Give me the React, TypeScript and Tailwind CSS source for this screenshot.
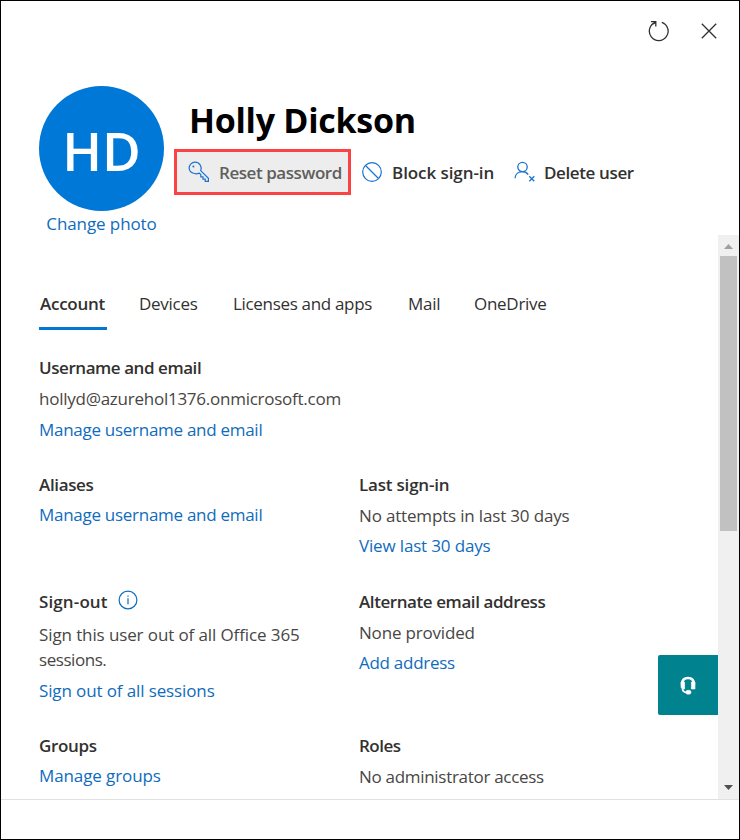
import type { ReactNode } from "react";

function Line({ className, children }: { className: string; children: ReactNode }) {
  return (
    <div className="flex">
      <span className={"whitespace-nowrap leading-6 " + className}>{children}</span>
    </div>
  );
}

const heading = "font-semibold text-[#323130] ";
const link = "text-[#0f6cbd] ";

function RefreshIcon() {
  return (
    <svg width="22" height="22" viewBox="0 0 22 22" fill="none" stroke="#323130" strokeWidth="1.3">
      <path d="M13.800 2.300A9.400 9.400 0 1 1 7.400 2.400" />
      <path d="M2.900 1.700h4.900v4.900M7.600 1.900L5 4" />
    </svg>
  );
}

function CloseIcon() {
  return (
    <svg width="16" height="16" viewBox="0 0 16 16" fill="none" stroke="#323130" strokeWidth="1.3">
      <path d="M.8.8l14.4 14.4M15.2.8L.8 15.2" />
    </svg>
  );
}

function KeyIcon() {
  return (
    <svg width="22" height="22" viewBox="0 0 22 22" fill="none" stroke="#1a73d0" strokeWidth="1.2">
      <path d="M12.700 9.600l7.700 7.700v3h-3.200v-2.200h-2.200v-2.200h-2.200v-2.300l-1.600-1.500C7.500 13.800 1.200 12 1.200 7 1.200 3.800 3.800 1.200 7 1.200c4.600 0 7.200 4.300 5.700 8.400z" />
      <circle cx="5.400" cy="5.400" r="1" fill="#1a73d0" stroke="none" />
    </svg>
  );
}

function BlockIcon() {
  return (
    <svg width="20" height="20" viewBox="0 0 20 20" fill="none" stroke="#1a73d0" strokeWidth="1.2">
      <circle cx="10" cy="10" r="9.300" />
      <path d="M3.500 3.500l13 13" />
    </svg>
  );
}

function DeleteUserIcon() {
  return (
    <svg width="22" height="22" viewBox="0 0 22 22" fill="none" stroke="#1a73d0" strokeWidth="1.3">
      <circle cx="8.500" cy="6" r="4.700" />
      <path d="M1 17.300c.2-4.200 3.300-6.700 7.300-6.700 2.500 0 4.600 1 5.900 3" />
      <path d="M15.300 15.300l5 5M20.300 15.300l-5 5" />
    </svg>
  );
}

function InfoIcon() {
  return (
    <svg width="20" height="20" viewBox="0 0 20 20" fill="none" stroke="#0f6cbd" strokeWidth="1.200">
      <circle cx="10" cy="10" r="8.900" />
      <path d="M10 8.200v6M10 5.400v1.400" />
    </svg>
  );
}

function HeadsetIcon() {
  return (
    <svg width="16" height="19" viewBox="0 0 16 19" fill="none" stroke="#fff">
      <path d="M2 8.500C2 3.800 4.200 2 8 2s6 1.800 6 6.500" strokeWidth="2.600" />
      <path d="M1 6h3.600v7H2.800L1 11.500zM11.400 6H15v7h-3.600z" fill="#fff" strokeWidth=".6" />
      <path d="M2.400 12.500c.2 2.500 1.500 3.900 4.500 3.900" strokeWidth="1.800" />
      <rect x="5.800" y="14.300" width="5.200" height="3.900" rx="1.800" fill="#fff" strokeWidth=".5" />
    </svg>
  );
}

export default function App() {
  return (
    <div className="relative flex h-[840px] w-[740px] flex-col overflow-hidden border border-black bg-white font-['Open_Sans','Noto_Sans',sans-serif] text-[17px] text-[#484644]">
      <header className="flex h-[234px] shrink-0 flex-col">
        <div className="flex h-[60px] shrink-0 items-center justify-end gap-[31px] pr-[22px]">
          <RefreshIcon />
          <CloseIcon />
        </div>
        <div className="flex pl-[38px] pt-[25px]">
          <div className="flex w-[125px] flex-col items-center">
            <div className="flex h-[125px] w-[125px] items-center justify-center rounded-full bg-[#0078d7] text-[53px] font-semibold leading-none text-white">
              <span className="mt-[4px]">HD</span>
            </div>
            <span className={link + "mt-px whitespace-nowrap leading-6 tracking-[-0.1px]"}>Change photo</span>
          </div>
          <div className="flex flex-col pl-[10px]">
            <h1 className="h-[63px] whitespace-nowrap pl-[15px] pt-[9px] text-[34px] font-bold leading-[50px] tracking-[-0.28px] text-black">Holly Dickson</h1>
            <div className="flex h-[46px] items-center font-semibold text-[#323130]">
              <div className="flex h-[46px] w-[177px] items-center border-[3px] border-[#fb4343] bg-[#ededed] pl-[11px] text-[#605e5c]">
                <KeyIcon />
                <span className="ml-[9px] mt-[2px] whitespace-nowrap tracking-[-0.44px]">Reset password</span>
              </div>
              <div className="ml-[11px] flex w-[152px] items-center">
                <BlockIcon />
                <span className="ml-[10px] mt-[2px] whitespace-nowrap tracking-[-0.07px]">Block sign-in</span>
              </div>
              <DeleteUserIcon />
              <span className="ml-[8px] mt-[2px] whitespace-nowrap tracking-[-0.38px]">Delete user</span>
            </div>
          </div>
        </div>
      </header>

      <main className="flex h-[564px] shrink-0">
        <div className="flex w-[717px] flex-col pl-[38px]">
          <nav className="mt-[57px] flex h-[38px] text-[#323130]">
            <span className="w-[68px] whitespace-nowrap border-b-[3px] border-[#0078d4] pl-[1px] font-semibold leading-6 tracking-[-0.25px]">Account</span>
            <span className="ml-[32px] w-[94px] whitespace-nowrap leading-6 tracking-[-0.28px]">Devices</span>
            <span className="w-[175px] whitespace-nowrap leading-6 tracking-[-0.32px]">Licenses and apps</span>
            <span className="w-[66px] whitespace-nowrap leading-6 tracking-[-0.28px]">Mail</span>
            <span className="whitespace-nowrap leading-6 tracking-[-0.28px]">OneDrive</span>
          </nav>

          <section className="mt-[26px] flex h-[117px] flex-col gap-[7px]">
            <Line className={heading + "tracking-[-0.44px]"}>Username and email</Line>
            <Line className="tracking-[-0.25px]">hollyd@azurehol1376.onmicrosoft.com</Line>
            <Line className={link + "tracking-[-0.28px]"}>Manage username and email</Line>
          </section>

          <div className="flex h-[117px]">
            <section className="flex w-[320px] flex-col gap-[6px]">
              <Line className={heading + "tracking-[-0.36px]"}>Aliases</Line>
              <Line className={link + "tracking-[-0.28px]"}>Manage username and email</Line>
            </section>
            <section className="flex flex-col gap-[6.500px]">
              <Line className={heading + "tracking-[-0.2px]"}>Last sign-in</Line>
              <Line className="tracking-[-0.17px]">No attempts in last 30 days</Line>
              <Line className={link + "tracking-[-0.16px]"}>View last 30 days</Line>
            </section>
          </div>

          <div className="flex h-[144px]">
            <section className="flex w-[320px] flex-col">
              <div className="flex h-6 items-center">
                <span className="w-[79px] whitespace-nowrap font-semibold leading-6 tracking-[0.12px] text-[#323130]">Sign-out</span>
                <span className="-mt-[5px]"><InfoIcon /></span>
              </div>
              <div className="mt-[9px] flex flex-col gap-px">
                <Line className="tracking-[-0.11px]">Sign this user out of all Office 365</Line>
                <Line className="tracking-[-0.45px]">sessions.</Line>
              </div>
              <div className="mt-[7px]">
                <Line className={link + "tracking-[-0.12px]"}>Sign out of all sessions</Line>
              </div>
            </section>
            <section className="flex flex-col gap-[6.500px]">
              <Line className={heading + "tracking-[-0.42px]"}>Alternate email address</Line>
              <Line className="tracking-[-0.18px]">None provided</Line>
              <Line className={link + "tracking-[-0.28px]"}>Add address</Line>
            </section>
          </div>

          <div className="flex">
            <section className="flex w-[320px] flex-col gap-[6px]">
              <Line className={heading + "tracking-[-0.36px]"}>Groups</Line>
              <Line className={link + "tracking-[-0.1px]"}>Manage groups</Line>
            </section>
            <section className="flex flex-col gap-[7px]">
              <Line className={heading + "tracking-[-0.5px]"}>Roles</Line>
              <Line className="tracking-[-0.3px]">No administrator access</Line>
            </section>
          </div>
        </div>

        <div className="flex w-[21px] flex-col items-center bg-[#f0f0f0]">
          <svg className="mt-[9px]" width="9" height="5" viewBox="0 0 9 5"><path d="M0 5h9L4.500 0z" fill="#a0a0a0" /></svg>
          <div className="mt-[7px] h-[275px] w-[17px] bg-[#c1c1c1]" />
          <svg className="mb-[9px] mt-auto" width="9" height="5" viewBox="0 0 9 5"><path d="M0 0h9L4.500 5z" fill="#505050" /></svg>
        </div>
      </main>

      <footer className="grow border-t border-[#e1e1e1] bg-white" />

      <div className="absolute left-[657px] top-[654px] flex h-[60px] w-[60px] items-center justify-center rounded-l-[2px] bg-[#00838f]">
        <HeadsetIcon />
      </div>
    </div>
  );
}
